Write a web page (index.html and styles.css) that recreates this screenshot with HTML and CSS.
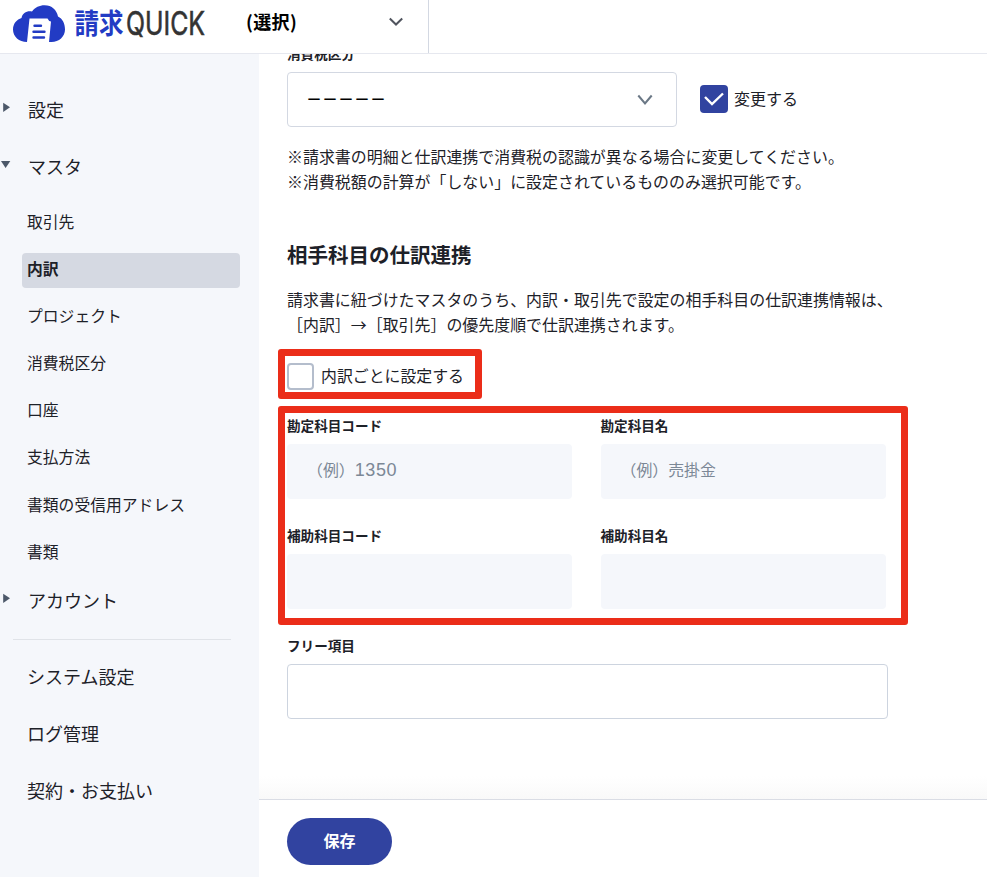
FILE: index.html
```
<!DOCTYPE html>
<html lang="ja">
<head>
<meta charset="utf-8">
<title>請求QUICK</title>
<link rel="stylesheet" href="styles.css">
</head>
<body>
<div class="app">
  <header class="header">
    <div class="brand">
      <svg class="logo" width="200" height="53" viewBox="0 -5 200 53">
        <path fill="#223bc4" d="M14 37C6 37 0 31.500 0 24.500C0 18.500 4 14.500 8.500 13C9.500 8 14 5.500 19 6.500C22 2.500 26.500 .3 31.500.3C39 .3 43.500 5 45 11.500C49.500 13.500 52 18.500 52 24.500C52 31.500 46 37 38.500 37Z"/>
        <path fill="#fff" d="M16.500 13.500H34.500Q35.500 16 38 16.500L36 37H14Z"/>
        <path stroke="#223bc4" stroke-width="2.400" stroke-linecap="round" d="M21.500 20.700h6.500M20.500 26.800h11M20.500 32.500h10.500"/>
        <text class="logo-kanji" x="61.500" y="28.500" textLength="49" lengthAdjust="spacingAndGlyphs">請求</text>
        <text class="logo-latin" x="113" y="29.600" textLength="79" lengthAdjust="spacingAndGlyphs">QUICK</text>
      </svg>
    </div>
    <div class="picker">
      <span>(選択)</span>
      <svg width="16" height="10" viewBox="0 0 16 10"><path class="chev-dark" d="M1.800 1.500L8 7.500L14.200 1.500"/></svg>
    </div>
  </header>
  <div class="body">
    <nav class="sidebar">
      <a class="item"><svg class="tri" width="11" height="11" viewBox="0 0 11 11"><path d="M3.200.7V10L10 5.300Z"/></svg>設定</a>
      <a class="item"><svg class="tri" width="11" height="11" viewBox="0 0 11 11"><path d="M1 2H10.300L5.600 9Z"/></svg>マスタ</a>
      <div class="subs">
        <a class="sub">取引先</a>
        <a class="sub active">内訳</a>
        <a class="sub">プロジェクト</a>
        <a class="sub">消費税区分</a>
        <a class="sub">口座</a>
        <a class="sub">支払方法</a>
        <a class="sub">書類の受信用アドレス</a>
        <a class="sub">書類</a>
      </div>
      <a class="item"><svg class="tri" width="11" height="11" viewBox="0 0 11 11"><path d="M3.200.7V10L10 5.300Z"/></svg>アカウント</a>
      <hr class="rule">
      <a class="item flat">システム設定</a>
      <a class="item flat">ログ管理</a>
      <a class="item flat">契約・お支払い</a>
    </nav>
    <main class="main">
      <div class="content">
        <div class="label first">消費税区分</div>
        <div class="tax-row">
          <div class="select"><span>－－－－－</span><svg width="16" height="12" viewBox="0 0 16 12"><path class="chev-soft" d="M1.300 1.500L8 9.500L14.700 1.500"/></svg></div>
          <div class="check on"><svg width="22" height="16" viewBox="0 0 22 16"><path class="tick" d="M2 6L9 13L20 2.500"/></svg></div>
          <span class="check-text">変更する</span>
        </div>
        <p class="notes">※請求書の明細と仕訳連携で消費税の認識が異なる場合に変更してください。<br>※消費税額の計算が「しない」に設定されているもののみ選択可能です。</p>
        <h2 class="title">相手科目の仕訳連携</h2>
        <p class="lead">請求書に紐づけたマスタのうち、内訳・取引先で設定の相手科目の仕訳連携情報は、<br>［内訳］→［取引先］の優先度順で仕訳連携されます。</p>
        <div class="mark toggle"><div class="check"></div><span class="check-text">内訳ごとに設定する</span></div>
        <div class="mark grid">
          <div><div class="label">勘定科目コード</div><div class="input off">（例）<span class="digits">1350</span></div></div>
          <div><div class="label">勘定科目名</div><div class="input off">（例）売掛金</div></div>
          <div><div class="label">補助科目コード</div><div class="input off"></div></div>
          <div><div class="label">補助科目名</div><div class="input off"></div></div>
        </div>
        <div class="label free">フリー項目</div>
        <div class="input wide"></div>
      </div>
      <div class="fade"></div>
      <footer class="footer"><button class="save">保存</button></footer>
    </main>
  </div>
</div>
</body>
</html>
```
FILE: styles.css
```
* { box-sizing: border-box; }
body {
  margin: 0;
  background: #fff;
  color: #1d2128;
  font-family: "Noto Sans CJK JP", sans-serif;
  font-size: 16px;
}
.app { width: 987px; height: 877px; display: flex; flex-direction: column; overflow: hidden; }
.header { height: 54px; flex: none; display: flex; border-bottom: 1px solid #e6e8ef; }
.brand { width: 246px; flex: none; padding-left: 13px; }
.logo { display: block; }
.logo-kanji { font-size: 28px; font-weight: 700; fill: #223bc4; }
.logo-latin { font-family: Inter, sans-serif; font-size: 33px; font-weight: 400; fill: #333; stroke: #333; stroke-width: .6; }
.picker {
  width: 183px; padding: 0 24px 9px 0;
  display: flex; align-items: center; justify-content: space-between;
  border-right: 1px solid #d3d8e2;
  color: #000; font-size: 18px; font-weight: 700; letter-spacing: .4px;
}
.picker span { padding-bottom: 3px; }
.chev-dark, .chev-soft, .tick { fill: none; stroke: #50545e; stroke-width: 2; }
.chev-soft { stroke: #6b7886; }
.tick { stroke: #fff; stroke-width: 2.4; }

.body { flex: 1; display: flex; min-height: 0; }
.sidebar { width: 259px; flex: none; padding-top: 28px; background: #f5f7fb; }
.item { display: flex; height: 57px; padding-bottom: 4px; align-items: center; font-size: 18px; }
.tri { margin: 0 17px 3px 0; fill: #4c5869; }
.flat { padding-left: 27px; }
.subs { padding: 2px 19px 0 22px; height: 377px; }
.sub { display: flex; align-items: center; height: 35px; margin-bottom: 12.100px; padding: 0 0 4px 5px; font-size: 15.800px; border-radius: 4px; }
.sub:first-child { margin-top: 8px; }
.active { background: #d5d9e2; font-weight: 700; }
.rule { margin: 9px 28px 9px 13px; border: 0; border-top: 1px solid #e0e3e8; }

.main { flex: 1; display: flex; flex-direction: column; min-width: 0; }
.content { height: 722px; flex: none; padding-left: 28px; overflow: hidden; }
.label { height: 20px; line-height: 18px; font-size: 13.600px; font-weight: 700; }
.first { margin: -10px 0 8px; }
.tax-row { display: flex; align-items: center; }
.select {
  width: 390px; height: 55px; margin-right: 23px; padding: 0 23px 0 18px;
  display: flex; align-items: center; justify-content: space-between;
  border: 1px solid #d3d8e2; border-radius: 4px; color: #000; font-weight: 700;
}
.select span { padding-bottom: 4px; }
.check { width: 27px; height: 27px; flex: none; border: 2px solid #b4bdcc; border-radius: 4px; }
.on { display: flex; align-items: center; justify-content: center; width: 28px; height: 28px; margin-bottom: 1px; border: 0; background: #3143a0; }
.check-text { margin-left: 6px; padding-bottom: 3px; line-height: 24px; }
.notes, .lead { margin: 17px 0 0; font-size: 15.950px; line-height: 24.500px; white-space: nowrap; }
.title { margin: 46px 0 0; font-size: 20.500px; line-height: 30px; }
.lead { margin-top: 18px; }
.mark { margin-left: -9px; border: 7px solid #eb2d19; border-radius: 3px; }
.toggle { width: 204px; height: 50px; margin-top: 13px; padding: 5px 0 0 2px; display: flex; align-items: center; }
.toggle .check-text { margin-left: 7px; padding-bottom: 1px; font-size: 15.900px; }
.grid {
  width: 630px; height: 219px; margin-top: 7px; padding: 3px 0 0 2px;
  display: grid; grid-template-columns: 285px 285px; column-gap: 28.500px;
  grid-template-rows: 110px 92px;
}
.input { height: 55px; border: 1px solid #cdd4df; border-radius: 4px; }
.off { margin-top: 8px; padding-left: 20px; border: 0; background: #f5f7fb; color: #7c8896; line-height: 52px; font-size: 15.900px; }
.digits { font-family: "Liberation Sans", sans-serif; font-size: 18px; letter-spacing: .6px; }
.free { margin: 11px 0 8px; }
.wide { width: 601px; }
.fade { height: 23px; flex: none; background: linear-gradient(#fff, #f9f9f9); }
.footer { flex: 1; padding: 18px 0 0 28px; border-top: 1px solid #dadde5; }
.save {
  display: block; width: 105px; height: 47px; padding: 0 0 4px; border: 0; border-radius: 24px;
  background: #3143a0; color: #fff; font: 700 16px "Noto Sans CJK JP", sans-serif;
}
```
